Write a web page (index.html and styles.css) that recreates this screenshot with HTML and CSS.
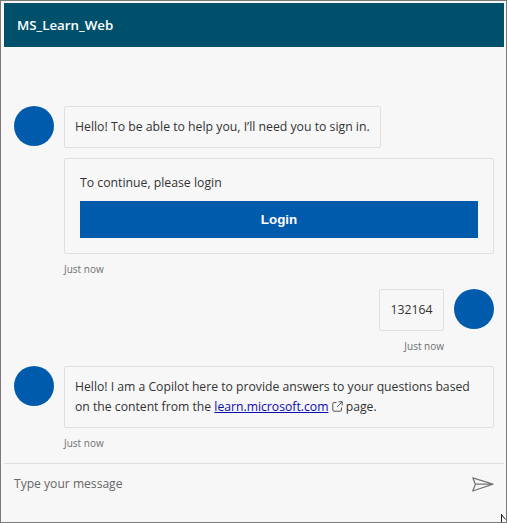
FILE: index.html
```html
<!DOCTYPE html>
<html>
<head>
    <title>MS_Learn_Web</title>
    <meta charset="UTF-8">
    <link rel="stylesheet" href="styles.css">
</head>
<body>
<div class="frame">
    <header class="chat-header">MS_Learn_Web</header>

    <div class="transcript">
        <div class="row">
            <div class="avatar"></div>
            <div class="stack">
                <div class="bubble">Hello! To be able to help you, I’ll need you to sign in.</div>
                <div class="card">
                    <p class="card-text">To continue, please login</p>
                    <button class="login-btn">Login</button>
                </div>
                <div class="stamp">Just now</div>
            </div>
        </div>

        <div class="row row-user">
            <div class="avatar"></div>
            <div class="stack stack-user">
                <div class="bubble bubble-user">132164</div>
                <div class="stamp">Just now</div>
            </div>
        </div>

        <div class="row">
            <div class="avatar"></div>
            <div class="stack">
                <div class="bubble bubble-wide">
                    <div>Hello! I am a Copilot here to provide answers to your questions based</div>
                    <div>on the content from the <a href="#">learn.microsoft.com</a>
                        <svg class="ext-icon" viewBox="0 0 11 11" width="11" height="11">
                            <path d="M4.500 1.500H2A1.200 1.200 0 0 0 .8 2.700V9A1.200 1.200 0 0 0 2 10.200h6.300A1.200 1.200 0 0 0 9.500 9V6.500M6.500.8h3.700v3.700M10.200.8 5 6" fill="none" stroke="#555" stroke-width="1"/>
                        </svg>
                        page.</div>
                </div>
                <div class="stamp">Just now</div>
            </div>
        </div>
    </div>

    <div class="composer">
        <span class="placeholder">Type your message</span>
        <svg class="send-icon" viewBox="0 0 22 15" width="22" height="15">
            <path d="M.8.8 21 7.200.8 14 3.400 7.200ZM3.400 7.200H21" fill="none" stroke="#767676" stroke-width="1.300" stroke-linejoin="round"/>
        </svg>
    </div>

    <svg class="resize-cursor" viewBox="0 0 5 8" width="5" height="8">
        <path d="M.5 0v8M.5.5 4.500 5.500" fill="none" stroke="#222" stroke-width="1"/>
    </svg>
</div>
</body>
</html>
```

FILE: styles.css
```css
* {
    box-sizing: border-box;
}

body {
    margin: 0;
    font-family: "Open Sans", sans-serif;
    font-size: 12.25px;
    color: #333;
    background: #fff;
}

.frame {
    position: relative;
    width: 507px;
    height: 523px;
    padding: 2px 2px 0 3px;
    border: 1px solid #7a7a7a;
    background: #f7f7f7;
    display: flex;
    flex-direction: column;
}

.chat-header {
    height: 44px;
    flex: none;
    display: flex;
    align-items: center;
    padding-left: 13px;
    background: #00506b;
    color: #fff;
    font-size: 13.300px;
    font-weight: 600;
}

.transcript {
    flex: 1;
    padding: 59px 10px 0;
    display: flex;
    flex-direction: column;
    gap: 12px;
}

.row {
    display: flex;
    gap: 10px;
}

.row-user {
    flex-direction: row-reverse;
}

.avatar {
    flex: none;
    width: 40px;
    height: 40px;
    border-radius: 50%;
    background: #005bac;
}

.stack {
    flex: 1;
    display: flex;
    flex-direction: column;
    align-items: flex-start;
}

.stack-user {
    align-items: flex-end;
}

.bubble {
    padding: 10px;
    line-height: 20px;
    border: 1px solid #e0e0e0;
    border-radius: 2px;
}

.bubble-user {
    height: 42px;
    padding: 10px 10.500px;
}

.bubble-wide {
    width: 100%;
    font-size: 12.200px;
}

.bubble a {
    color: #0a0ab0;
}

.ext-icon {
    vertical-align: -1px;
}

.card {
    width: 100%;
    margin-top: 10px;
    padding: 15px;
    border: 1px solid #e0e0e0;
    border-radius: 2px;
}

.card-text {
    margin: 0 0 9px;
    line-height: 18px;
}

.login-btn {
    display: block;
    width: 100%;
    height: 37px;
    border: 0;
    background: #005bac;
    color: #fff;
    font-family: "Liberation Sans", sans-serif;
    font-size: 13.333px;
    font-weight: bold;
}

.stamp {
    margin-top: 8px;
    padding-bottom: 1px;
    font-size: 10px;
    line-height: 14px;
    color: #707070;
}

.composer {
    height: 59px;
    flex: none;
    display: flex;
    align-items: center;
    justify-content: space-between;
    padding: 0 10px 20px;
    border-top: 1px solid #e0e0e0;
}

.placeholder {
    color: #666;
    font-size: 12.100px;
}

.send-icon {
    margin-top: 2px;
}

.resize-cursor {
    position: absolute;
    right: 0;
    bottom: 0;
}
```
